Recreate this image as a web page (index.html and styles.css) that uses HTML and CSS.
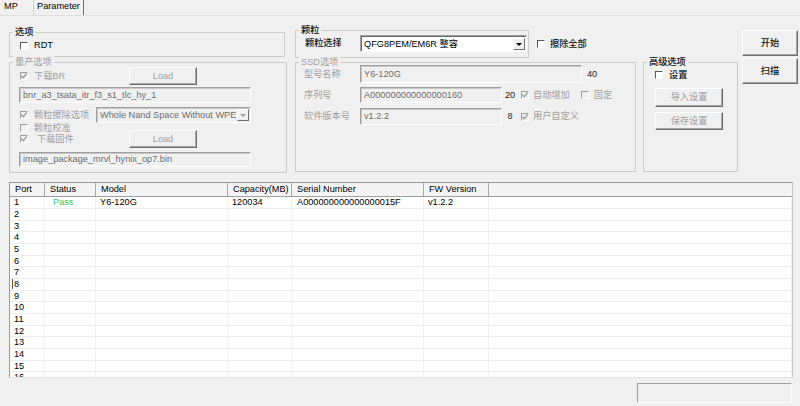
FILE: index.html
```html
<!DOCTYPE html>
<html>
<head>
<meta charset="utf-8">
<title>MP</title>
<link rel="stylesheet" href="styles.css">
</head>
<body>
<div class="tabs">
  <div class="tab tab-active">MP</div>
  <div class="tab tab-other">Parameter</div>
</div>

<div class="top">
  <div class="col-left">
    <div class="group group-a">
      <div class="legend dk">选项</div>
      <div class="rdt-row"><span class="cb"></span><span class="lbl">RDT</span></div>
    </div>
    <div class="group group-b">
      <div class="legend dis">量产选项</div>
      <div class="gb-row r1">
        <div class="chkwrap w109"><span class="cb cb-dis"><svg class="ck" viewBox="0 0 6 6"><path d="M0.3 2.6 L2.2 4.8 L5.8 0.4" /></svg></span><span class="lbl dis">下载BR</span></div>
        <div class="btn btn-load dis">Load</div>
      </div>
      <div class="field f1">bnr_a3_tsata_itr_f3_s1_tlc_hy_1</div>
      <div class="gb-row r3">
        <div class="chkwrap w76"><span class="cb cb-dis"><svg class="ck" viewBox="0 0 6 6"><path d="M0.3 2.6 L2.2 4.8 L5.8 0.4" /></svg></span><span class="lbl dis">颗粒擦除选项</span></div>
        <div class="select select-dis sel-erase"><span class="sel-text">Whole Nand Space Without WPE</span><span class="sel-btn"><span class="tri tri-dis"></span></span></div>
      </div>
      <div class="gb-row r4">
        <div class="chkwrap"><span class="cb cb-dis"></span><span class="lbl dis">颗粒校准</span></div>
      </div>
      <div class="gb-row r5">
        <div class="chkwrap w109"><span class="cb cb-dis"><svg class="ck" viewBox="0 0 6 6"><path d="M0.3 2.6 L2.2 4.8 L5.8 0.4" /></svg></span><span class="lbl lbl-wide dis">下载固件</span></div>
        <div class="btn btn-load dis">Load</div>
      </div>
      <div class="field f2">image_package_mrvl_hynix_op7.bin</div>
    </div>
  </div>

  <div class="col-mid">
    <div class="mid-row1">
      <div class="group group-chip">
        <div class="legend dk">颗粒</div>
        <div class="chip-row">
          <span class="flabel dk">颗粒选择</span>
          <div class="select sel-chip"><span class="sel-text">QFG8PEM/EM6R 整容</span><span class="sel-btn"><span class="tri"></span></span></div>
        </div>
      </div>
      <div class="erase-all"><span class="cb"></span><span class="lbl lbl-n dk">擦除全部</span></div>
    </div>
    <div class="mid-row2">
      <div class="group group-ssd">
        <div class="legend dis">SSD选项</div>
        <div class="ssd-row s1">
          <span class="flabel dis">型号名称</span>
          <div class="field w222">Y6-120G</div>
          <span class="num n40">40</span>
        </div>
        <div class="ssd-row s2">
          <span class="flabel dis">序列号</span>
          <div class="field w142">A000000000000000160</div>
          <span class="num">20</span>
          <span class="cb cb-dis cb-near"><svg class="ck" viewBox="0 0 6 6"><path d="M0.3 2.6 L2.2 4.8 L5.8 0.4" /></svg></span><span class="lbl lbl-s dis">自动增加</span>
          <span class="cb cb-dis cb-fixed"></span><span class="lbl lbl-f dis">固定</span>
        </div>
        <div class="ssd-row s3">
          <span class="flabel dis">软件版本号</span>
          <div class="field w142">v1.2.2</div>
          <span class="num">8</span>
          <span class="cb cb-dis cb-near"><svg class="ck" viewBox="0 0 6 6"><path d="M0.3 2.6 L2.2 4.8 L5.8 0.4" /></svg></span><span class="lbl lbl-s dis">用户自定义</span>
        </div>
      </div>
      <div class="group group-adv">
        <div class="legend dk">高级选项</div>
        <div class="adv-row"><span class="cb"></span><span class="lbl dk">设置</span></div>
        <div class="btn adv-btn dis">导入设置</div>
        <div class="btn adv-btn adv-btn2 dis">保存设置</div>
      </div>
    </div>
  </div>

  <div class="col-right">
    <div class="btn big-btn dk">开始</div>
    <div class="btn big-btn big-btn2 dk">扫描</div>
  </div>
</div>

<div class="grid">
  <div class="thead">
    <div class="th">Port</div>
    <div class="th">Status</div>
    <div class="th">Model</div>
    <div class="th">Capacity(MB)</div>
    <div class="th">Serial Number</div>
    <div class="th">FW Version</div>
    <div class="th th-last"></div>
  </div>
  <div class="tbody">
    <div class="tr"><div class="td">1</div><div class="td"><span class="pass">Pass</span></div><div class="td">Y6-120G</div><div class="td">120034</div><div class="td td-sn">A000000000000000015F</div><div class="td">v1.2.2</div><div class="td"></div></div>
    <div class="tr"><div class="td">2</div><div class="td"></div><div class="td"></div><div class="td"></div><div class="td"></div><div class="td"></div><div class="td"></div></div>
    <div class="tr"><div class="td">3</div><div class="td"></div><div class="td"></div><div class="td"></div><div class="td"></div><div class="td"></div><div class="td"></div></div>
    <div class="tr"><div class="td">4</div><div class="td"></div><div class="td"></div><div class="td"></div><div class="td"></div><div class="td"></div><div class="td"></div></div>
    <div class="tr"><div class="td">5</div><div class="td"></div><div class="td"></div><div class="td"></div><div class="td"></div><div class="td"></div><div class="td"></div></div>
    <div class="tr"><div class="td">6</div><div class="td"></div><div class="td"></div><div class="td"></div><div class="td"></div><div class="td"></div><div class="td"></div></div>
    <div class="tr"><div class="td">7</div><div class="td"></div><div class="td"></div><div class="td"></div><div class="td"></div><div class="td"></div><div class="td"></div></div>
    <div class="tr"><div class="td td-caret"><span class="caret">8</span></div><div class="td"></div><div class="td"></div><div class="td"></div><div class="td"></div><div class="td"></div><div class="td"></div></div>
    <div class="tr"><div class="td">9</div><div class="td"></div><div class="td"></div><div class="td"></div><div class="td"></div><div class="td"></div><div class="td"></div></div>
    <div class="tr"><div class="td">10</div><div class="td"></div><div class="td"></div><div class="td"></div><div class="td"></div><div class="td"></div><div class="td"></div></div>
    <div class="tr"><div class="td">11</div><div class="td"></div><div class="td"></div><div class="td"></div><div class="td"></div><div class="td"></div><div class="td"></div></div>
    <div class="tr"><div class="td">12</div><div class="td"></div><div class="td"></div><div class="td"></div><div class="td"></div><div class="td"></div><div class="td"></div></div>
    <div class="tr"><div class="td">13</div><div class="td"></div><div class="td"></div><div class="td"></div><div class="td"></div><div class="td"></div><div class="td"></div></div>
    <div class="tr"><div class="td">14</div><div class="td"></div><div class="td"></div><div class="td"></div><div class="td"></div><div class="td"></div><div class="td"></div></div>
    <div class="tr"><div class="td">15</div><div class="td"></div><div class="td"></div><div class="td"></div><div class="td"></div><div class="td"></div><div class="td"></div></div>
    <div class="tr"><div class="td">16</div><div class="td"></div><div class="td"></div><div class="td"></div><div class="td"></div><div class="td"></div><div class="td"></div></div>
  </div>
</div>

<div class="status-row"><div class="status-box"></div></div>
</body>
</html>
```

FILE: styles.css
```css
* { box-sizing: border-box; }
html, body { margin: 0; padding: 0; }
body {
  width: 800px;
  height: 406px;
  overflow: hidden;
  background: #f0f0f0;
  font-family: "Liberation Sans", "Noto Sans CJK SC", sans-serif;
  font-size: 9.2px;
  line-height: 11px;
  color: #000;
}
.dis { color: #a0a0a0; }
.dk { font-weight: 500; color: #111; }

/* tabs */
.tabs { display: flex; height: 16px; border-bottom: 1px solid #e0e0e0; }
.tab { height: 15px; line-height: 13px; }
.tab-active { width: 33px; padding-left: 4px; }
.tab-other { width: 51px; padding-left: 3px; border-left: 1px solid #d4d4d4; border-right: 1px solid #6d6d6d; }

/* top area */
.top { display: flex; height: 157px; }
.col-left { margin-left: 9px; width: 278px; padding-top: 16px; }
.col-mid { margin-left: 8px; width: 443px; padding-top: 14px; }
.col-right { margin-left: 4px; width: 56px; padding-top: 14px; }

.group { border: 1px solid #cbcbcb; }
.legend {
  width: fit-content;
  height: 12px;
  line-height: 12px;
  margin: -7px 0 0 3px;
  padding: 0 2px;
  background: #f0f0f0;
}

/* checkbox */
.cb {
  display: block;
  flex: none;
  width: 8px;
  height: 8px;
  background: #fff;
  border-top: 1px solid #5a5a5a;
  border-left: 1px solid #5a5a5a;
  border-right: 1px solid #fff;
  border-bottom: 1px solid #fff;
}
.cb-dis { background: #f0f0f0; border-top-color: #a0a0a0; border-left-color: #a0a0a0; }
.ck { display: block; width: 6px; height: 6px; }
.ck path { fill: none; stroke: #9a9a9a; stroke-width: 1.3; }
.lbl { margin-left: 6px; white-space: nowrap; }

/* buttons */
.btn {
  display: flex;
  align-items: center;
  justify-content: center;
  background: #f0f0f0;
  border: 1px solid;
  border-color: #fff #6d6d6d #6d6d6d #fff;
  box-shadow: inset -1px -1px 0 #a8a8a8;
  white-space: nowrap;
}

/* fields */
.field {
  height: 16px;
  padding-left: 3px;
  line-height: 14px;
  color: #6d6d6d;
  background: #f0f0f0;
  border-top: 1px solid #a0a0a0;
  border-left: 1px solid #a0a0a0;
  border-right: 1px solid #fff;
  border-bottom: 1px solid #fff;
  box-shadow: inset 1px 1px 0 #c8c8c8;
  white-space: nowrap;
  overflow: hidden;
}

/* select */
.select {
  display: flex;
  align-items: center;
  background: #fff;
  border-top: 1px solid #a0a0a0;
  border-left: 1px solid #a0a0a0;
  border-right: 1px solid #fff;
  border-bottom: 1px solid #fff;
  box-shadow: inset 1px 1px 0 #696969;
  padding: 2px 1px 1px 2px;
}
.select-dis { background: #f0f0f0; box-shadow: inset 1px 1px 0 #c8c8c8; color: #6d6d6d; }
.sel-text { flex: 1; padding-left: 1px; white-space: nowrap; overflow: hidden; }
.sel-btn {
  display: flex;
  align-items: center;
  justify-content: center;
  flex: none;
  width: 12px;
  height: 100%;
  background: #f0f0f0;
  border: 1px solid;
  border-color: #fff #6d6d6d #6d6d6d #fff;
}
.tri {
  width: 0;
  height: 0;
  border-left: 3px solid transparent;
  border-right: 3px solid transparent;
  border-top: 3px solid #000;
}
.tri-dis { border-top-color: #a0a0a0; }

/* group A */
.group-a { width: 276px; height: 25px; }
.rdt-row { display: flex; align-items: center; margin-top: 1px; height: 13px; padding-left: 10px; }

/* group B */
.group-b { width: 278px; height: 111px; margin-top: 5px; }
.gb-row { display: flex; align-items: center; padding-left: 10px; }
.chkwrap { display: flex; align-items: center; }
.w109 { width: 109px; }
.w76 { width: 76px; }
.r1 { margin-top: -1px; height: 18px; }
.btn-load { width: 68px; height: 18px; }
.f1 { margin: 2px 0 0 9px; width: 232px; height: 16px; }
.r3 { margin-top: 4px; height: 16px; }
.sel-erase { width: 155px; height: 16px; padding-top: 1px; }
.r4 { height: 10px; }
.r5 { margin-top: -3px; height: 18px; }
.lbl-wide { margin-left: 9px; }
.f2 { margin: 4px 0 0 9px; width: 232px; height: 15px; line-height: 13px; }

/* chip group */
.mid-row1 { display: flex; }
.group-chip { width: 234px; height: 28px; }
.chip-row { display: flex; align-items: center; margin-top: -1px; height: 17px; padding-left: 9px; }
.flabel { flex: none; width: 55px; white-space: nowrap; }
.sel-chip { width: 167px; height: 17px; }
.erase-all { display: flex; align-items: center; margin: 8px 0 0 8px; height: 12px; }
.lbl-n { margin-left: 5px; }

/* ssd group */
.mid-row2 { display: flex; margin-top: 4px; }
.group-ssd { width: 341px; height: 110px; }
.ssd-row { display: flex; align-items: center; padding-left: 8px; }
.ssd-row .flabel { width: 56px; }
.s1 { margin-top: -3px; height: 18px; }
.s1 .field { height: 18px; line-height: 16px; }
.s2 { margin-top: 4px; height: 16px; }
.s3 { margin-top: 5px; height: 17px; }
.s3 .field { height: 17px; line-height: 15px; }
.w222 { width: 222px; }
.w142 { width: 142px; }
.num { width: 16px; text-align: center; color: #222; }
.n40 { width: 20px; }
.cb-near { margin-left: 3px; }
.lbl-s { margin-left: 4px; }
.cb-fixed { margin-left: 11px; }
.lbl-f { margin-left: 5px; }

/* advanced group */
.group-adv { width: 95px; height: 110px; margin-left: 7px; }
.adv-row { display: flex; align-items: center; margin-top: 1px; height: 12px; padding-left: 11px; }
.adv-btn { margin: 7px 0 0 11px; width: 68px; height: 19px; }
.adv-btn2 { margin-top: 5px; height: 18px; }

/* right buttons */
.big-btn { width: 56px; height: 26px; }
.big-btn2 { margin-top: 2px; }

/* grid */
.grid {
  margin: 9px 0 0 9px;
  width: 784px;
  height: 196px;
  overflow: hidden;
  background: #fff;
  border-top: 1px solid #9a9a9a;
  border-left: 1px solid #9a9a9a;
  border-right: 1px solid #c8c8c8;
  border-bottom: 1px solid #e4e4e4;
}
.thead, .tr {
  display: grid;
  grid-template-columns: 35px 51px 132px 64px 132px 65px 1fr;
}
.thead { height: 14px; background: #f4f4f4; border-bottom: 1px solid #a0a0a0; }
.th { border-right: 1px solid #a8a8a8; padding-left: 5px; line-height: 13px; white-space: nowrap; overflow: hidden; }
.th-last { border-right: none; }
.tr { height: 12px; border-bottom: 1px solid #ededed; }
.tr:nth-child(3n) { height: 11px; }
.td { border-right: 1px solid #f2f2f2; padding-left: 4px; line-height: 11px; white-space: nowrap; overflow: hidden; }
.td-sn { padding-left: 5px; }
.pass { padding-left: 4px; color: #43c943; }
.td-caret { padding-left: 2px; }
.caret { border-left: 1px solid #555; padding-left: 1px; }

/* status */
.status-row { display: flex; justify-content: flex-end; margin-top: 5px; padding-right: 8px; }
.status-box {
  width: 155px;
  height: 20px;
  border-top: 1px solid #a0a0a0;
  border-left: 1px solid #a0a0a0;
  border-right: 1px solid #fff;
  border-bottom: 1px solid #fff;
}
```
